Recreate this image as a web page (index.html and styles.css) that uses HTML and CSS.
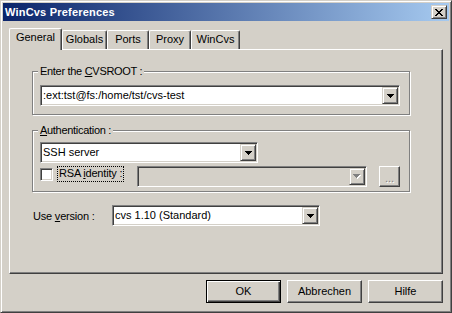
FILE: index.html
```html
<!DOCTYPE html>
<html>
<head>
<meta charset="utf-8">
<title>WinCvs Preferences</title>
<link rel="stylesheet" href="styles.css">
</head>
<body>
<div class="window">
  <div class="titlebar">
    <span class="title">WinCvs Preferences</span>
    <span class="close-btn">
      <svg width="8" height="7" viewBox="0 0 8 7"><path d="M0 0h2v1h-2z M6 0h2v1h-2z M1 1h2v1h-2z M5 1h2v1h-2z M2 2h4v1h-4z M3 3h2v1h-2z M2 4h4v1h-4z M1 5h2v1h-2z M5 5h2v1h-2z M0 6h2v1h-2z M6 6h2v1h-2z" fill="#000"/></svg>
    </span>
  </div>
  <div class="client">
    <div class="tabs">
      <div class="tab active tab-general">General</div>
      <div class="tab tab-globals">Globals</div>
      <div class="tab tab-ports">Ports</div>
      <div class="tab tab-proxy">Proxy</div>
      <div class="tab tab-wincvs">WinCvs</div>
    </div>
    <div class="panel">
      <div class="group group-root">
        <span class="group-label">Enter the <u>C</u>VSROOT :</span>
        <div class="combo combo-root">
          <span class="combo-text">:ext:tst@fs:/home/tst/cvs-test</span>
          <span class="drop"><svg width="7" height="4" viewBox="0 0 7 4"><path d="M0 0h7v1h-1v1h-1v1h-1v1h-1v-1h-1v-1h-1v-1h-1z" fill="#000"/></svg></span>
        </div>
      </div>
      <div class="group group-auth">
        <span class="group-label"><u>A</u>uthentication :</span>
        <div class="combo combo-ssh">
          <span class="combo-text">SSH server</span>
          <span class="drop"><svg width="7" height="4" viewBox="0 0 7 4"><path d="M0 0h7v1h-1v1h-1v1h-1v1h-1v-1h-1v-1h-1v-1h-1z" fill="#000"/></svg></span>
        </div>
        <div class="rsa-row">
          <span class="checkbox"></span>
          <span class="check-label">RSA <u>i</u>dentity :</span>
          <div class="combo combo-disabled">
            <span class="combo-text"></span>
            <span class="drop"><svg width="8" height="5" viewBox="0 0 8 5"><path d="M1 1h7v1h-1v1h-1v1h-1v1h-1v-1h-1v-1h-1v-1h-1z" fill="#fff"/><path d="M0 0h7v1h-1v1h-1v1h-1v1h-1v-1h-1v-1h-1v-1h-1z" fill="#808080"/></svg></span>
          </div>
          <span class="btn dots-btn">...</span>
        </div>
      </div>
      <div class="version-row">
        <span class="version-label">Use <u>v</u>ersion :</span>
        <div class="combo combo-version">
          <span class="combo-text">cvs 1.10 (Standard)</span>
          <span class="drop"><svg width="7" height="4" viewBox="0 0 7 4"><path d="M0 0h7v1h-1v1h-1v1h-1v1h-1v-1h-1v-1h-1v-1h-1z" fill="#000"/></svg></span>
        </div>
      </div>
    </div>
    <div class="buttons">
      <span class="btn btn-default">OK</span>
      <span class="btn">Abbrechen</span>
      <span class="btn">Hilfe</span>
    </div>
  </div>
</div>
</body>
</html>
```
FILE: styles.css
```css
* { box-sizing: border-box; }
html, body { margin: 0; padding: 0; }
body {
  width: 452px;
  height: 313px;
  overflow: hidden;
  background: #d4d0c8;
  font-family: "Liberation Sans", Arial, sans-serif;
  font-size: 11px;
  line-height: 13px;
  color: #000;
}
u { text-decoration: underline; text-underline-offset: 1px; }

.window {
  width: 452px;
  height: 313px;
  background: #d4d0c8;
  border: 1px solid;
  border-color: #d4d0c8 #404040 #404040 #d4d0c8;
  box-shadow: inset 1px 1px #fff, inset -1px -1px #808080;
  padding: 2px;
  display: flex;
  flex-direction: column;
}

.titlebar {
  height: 18px;
  background: linear-gradient(to right, #0a246a, #a6caf0);
  display: flex;
  align-items: center;
  justify-content: space-between;
  padding: 0 2px;
}
.title {
  color: #fff;
  font-weight: bold;
  font-size: 11px;
  letter-spacing: 0.2px;
  padding-top: 1px;
}
.close-btn {
  width: 16px;
  height: 14px;
  background: #d4d0c8;
  border: 1px solid;
  border-color: #d4d0c8 #404040 #404040 #d4d0c8;
  box-shadow: inset 1px 1px #fff, inset -1px -1px #808080;
  display: flex;
  align-items: center;
  justify-content: center;
}
.close-btn svg { display: block; }

.client {
  flex: 1;
  padding: 7px 6px 0 6px;
  display: flex;
  flex-direction: column;
}

.tabs {
  height: 21px;
  display: flex;
  align-items: flex-end;
}
.tab {
  height: 19px;
  padding-top: 2px;
  text-align: center;
  border-top: 1px solid #fff;
  border-left: 1px solid #fff;
  border-right: 1px solid #404040;
  box-shadow: inset -1px 0 #808080;
  border-radius: 2px 2px 0 0;
  background: #d4d0c8;
}
.tab.active {
  height: 22px;
  margin-bottom: -1px;
  position: relative;
  z-index: 1;
}
.tab-general { width: 53px; }
.tab-globals { width: 45px; }
.tab-ports { width: 42px; }
.tab-proxy { width: 42px; }
.tab-wincvs { width: 49px; }

.panel {
  height: 225px;
  border: 1px solid;
  border-color: #fff #404040 #404040 #fff;
  box-shadow: inset -1px -1px #808080;
  padding: 21px 0 0 22px;
  display: flex;
  flex-direction: column;
  align-items: flex-start;
}

.group {
  position: relative;
  width: 378px;
  border: 1px solid #808080;
  box-shadow: inset 1px 1px #fff, 1px 1px #fff;
  padding-left: 7px;
}
.group-root { height: 44px; padding-top: 13px; }
.group-auth { height: 62px; padding-top: 11px; margin-top: 15px; }
.group-label {
  position: absolute;
  top: -7px;
  left: 5px;
  padding: 0 2px;
  letter-spacing: -0.3px;
  background: #d4d0c8;
}

.combo {
  height: 21px;
  border: 1px solid;
  border-color: #808080 #fff #fff #808080;
  box-shadow: inset 1px 1px #404040, inset -1px -1px #d4d0c8;
  padding: 1px;
  background: #fff;
  display: flex;
}
.combo-text {
  flex: 1;
  padding-left: 1px;
  line-height: 17px;
  white-space: nowrap;
}
.drop {
  width: 16px;
  height: 17px;
  background: #d4d0c8;
  border: 1px solid;
  border-color: #d4d0c8 #404040 #404040 #d4d0c8;
  box-shadow: inset 1px 1px #fff, inset -1px -1px #808080;
  display: flex;
  align-items: center;
  justify-content: center;
}
.drop svg { display: block; }
.combo-root { width: 360px; }
.combo-ssh { width: 218px; }
.combo-version { width: 208px; }
.combo-disabled {
  width: 230px;
  margin-left: auto;
  background: #d4d0c8;
}

.rsa-row {
  width: 360px;
  height: 21px;
  margin-top: 3px;
  display: flex;
  align-items: flex-start;
}
.checkbox {
  width: 13px;
  height: 13px;
  margin-top: 2px;
  background: #fff;
  border: 1px solid;
  border-color: #808080 #fff #fff #808080;
  box-shadow: inset 1px 1px #404040, inset -1px -1px #d4d0c8;
}
.check-label {
  margin-left: 4px;
  height: 16px;
  padding: 1px 2px 0 2px;
  letter-spacing: -0.2px;
  outline: 1px dotted #000;
  outline-offset: -1px;
  white-space: nowrap;
}

.btn {
  width: 75px;
  height: 23px;
  display: flex;
  align-items: center;
  justify-content: center;
  background: #d4d0c8;
  border: 1px solid;
  border-color: #fff #404040 #404040 #fff;
  box-shadow: inset -1px -1px #808080;
}
.btn-default {
  border: 1px solid #000;
  box-shadow: inset 1px 1px #fff, inset -1px -1px #404040, inset -2px -2px #808080;
}
.dots-btn {
  width: 21px;
  height: 21px;
  margin-left: 12px;
  color: #808080;
  text-shadow: 1px 1px #fff;
  padding-top: 3px;
}

.version-row {
  margin-top: 13px;
  margin-left: 1px;
  display: flex;
  align-items: center;
}
.version-label {
  width: 79px;
  padding-top: 2px;
  letter-spacing: -0.2px;
}

.buttons {
  margin-top: 6px;
  display: flex;
  justify-content: flex-end;
  gap: 6px;
}
```
